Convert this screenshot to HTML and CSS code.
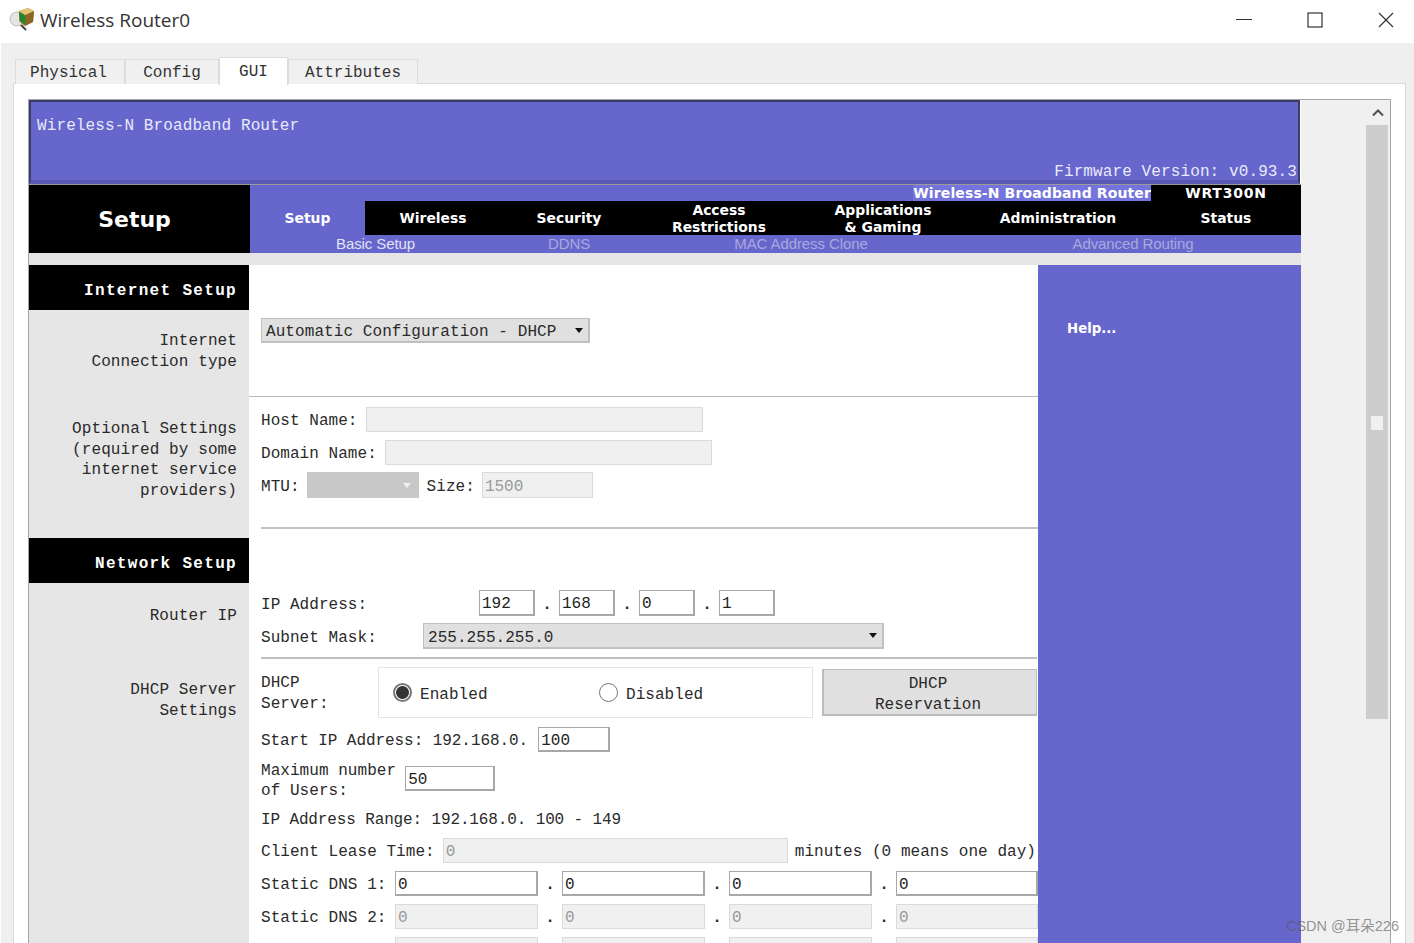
FILE: index.html
```html
<!DOCTYPE html>
<html lang="en">
<head>
<meta charset="utf-8">
<title>Wireless Router0</title>
<link rel="stylesheet" href="styles.css">
</head>
<body>
<div class="window">
  <header class="titlebar">
    <svg class="app-icon" width="26" height="26" viewBox="0 0 26 26">
      <path d="M11 18l6 6" stroke="#444" stroke-width="2" fill="none"/>
      <circle cx="8" cy="13" r="7" fill="#e4e4e4" stroke="#bbb"/>
      <path d="M10 5l9-3 6 3-1 11-9 4-5-5z" fill="#b08a3c"/>
      <path d="M10 6l6 3v10l-5-4z" fill="#1c8a2c"/>
      <path d="M16 9l9-4-1 11-8 4z" fill="#8a6526"/>
      <path d="M10 5l9-3 6 3-9 4z" fill="#e3c476"/>
    </svg>
    <span class="app-title">Wireless Router0</span>
    <div class="controls">
      <svg width="16" height="16" viewBox="0 0 16 16"><path d="M0 7.5h16" stroke="#333" stroke-width="1" fill="none"/></svg>
      <svg width="16" height="16" viewBox="0 0 16 16"><rect x="1" y="1" width="14" height="14" stroke="#333" stroke-width="1.2" fill="none"/></svg>
      <svg width="16" height="16" viewBox="0 0 16 16"><path d="M1 1l14 14M15 1L1 15" stroke="#333" stroke-width="1.2" fill="none"/></svg>
    </div>
  </header>

  <div class="client">
    <nav class="tabs">
      <div class="tab tab-physical">Physical</div>
      <div class="tab tab-config">Config</div>
      <div class="tab tab-gui">GUI</div>
      <div class="tab tab-attr">Attributes</div>
    </nav>
    <div class="panel">
      <div class="frame">
        <div class="page">
          <div class="banner">
            <div>Wireless-N Broadband Router</div>
            <div class="firmware">Firmware Version: v0.93.3</div>
          </div>

          <div class="nav">
            <div class="nav-section">Setup</div>
            <div class="nav-grid">
              <div class="nav-product"><span class="product-name">Wireless-N Broadband Router</span></div>
              <div class="nav-model">WRT300N</div>
              <div class="nav-item nav-active">Setup</div>
              <div class="nav-item">Wireless</div>
              <div class="nav-item">Security</div>
              <div class="nav-item nav-two">Access<br>Restrictions</div>
              <div class="nav-item nav-two">Applications<br>&amp; Gaming</div>
              <div class="nav-item">Administration</div>
              <div class="nav-item">Status</div>
              <div class="sub sub-on span-2">Basic Setup</div>
              <div class="sub">DDNS</div>
              <div class="sub span-2">MAC Address Clone</div>
              <div class="sub span-2">Advanced Routing</div>
            </div>
          </div>
          <div class="stripe"></div>

          <div class="columns">
            <aside class="side">
              <div class="side-head">Internet Setup</div>
              <div class="side-text st-internet">Internet<br>Connection type</div>
              <div class="side-text st-optional">Optional Settings<br>(required by some<br>internet service<br>providers)</div>
              <div class="side-head sh-network">Network Setup</div>
              <div class="side-text st-router">Router IP</div>
              <div class="side-text st-dhcp">DHCP Server<br>Settings</div>
            </aside>

            <main class="form">
              <section class="sec-type">
                <div class="select select-type"><span>Automatic Configuration - DHCP</span><i class="caret"></i></div>
              </section>

              <section class="sec-opt">
                <div class="row"><label>Host Name:</label><input class="in in-off w-host" disabled></div>
                <div class="row"><label>Domain Name:</label><input class="in in-off w-domain" disabled></div>
                <div class="row row-mtu"><label>MTU:</label>
                  <div class="select-off"><i class="caret caret-off"></i></div>
                  <label>Size:</label><input class="in in-off w-size" value="1500" disabled></div>
              </section>
              <div class="rule rule-1"></div>

              <div class="row row-ip"><label class="l-ip">IP Address:</label>
                <input class="in w-oct" value="192"><span class="dot d-ip">.</span>
                <input class="in w-oct" value="168"><span class="dot d-ip">.</span>
                <input class="in w-oct" value="0"><span class="dot d-ip">.</span>
                <input class="in w-oct" value="1"></div>
              <div class="row row-mask"><label class="l-mask">Subnet Mask:</label>
                <div class="select select-mask"><span>255.255.255.0</span><i class="caret"></i></div></div>
              <div class="rule rule-2"></div>

              <div class="row row-dhcp">
                <label class="l-dhcp">DHCP<br>Server:</label>
                <div class="radio-box">
                  <div class="radio-opt"><i class="radio radio-on"></i><span class="radio-text">Enabled</span></div>
                  <div class="radio-opt"><i class="radio"></i><span class="radio-text">Disabled</span></div>
                </div>
                <div class="btn">DHCP<br>Reservation</div>
              </div>

              <div class="row row-start"><label>Start IP Address: 192.168.0.</label><input class="in w-start" value="100"></div>
              <div class="row row-max"><label class="l-max">Maximum number<br>of Users:</label><input class="in w-max" value="50"></div>
              <div class="row row-range"><label>IP Address Range: 192.168.0. 100 - 149</label></div>
              <div class="row row-lease"><label>Client Lease Time:</label><input class="in in-off w-lease" value="0" disabled><label>minutes (0 means one day)</label></div>

              <div class="row row-dns"><label class="l-dns">Static DNS 1:</label>
                <input class="in w-dns" value="0"><span class="dot">.</span>
                <input class="in w-dns" value="0"><span class="dot">.</span>
                <input class="in w-dns" value="0"><span class="dot">.</span>
                <input class="in w-dns-last" value="0"></div>
              <div class="row row-dns"><label class="l-dns">Static DNS 2:</label>
                <input class="in in-off w-dns" value="0" disabled><span class="dot">.</span>
                <input class="in in-off w-dns" value="0" disabled><span class="dot">.</span>
                <input class="in in-off w-dns" value="0" disabled><span class="dot">.</span>
                <input class="in in-off w-dns-last" value="0" disabled></div>
              <div class="row row-dns"><label class="l-dns">Static DNS 3:</label>
                <input class="in in-off w-dns" value="0" disabled><span class="dot">.</span>
                <input class="in in-off w-dns" value="0" disabled><span class="dot">.</span>
                <input class="in in-off w-dns" value="0" disabled><span class="dot">.</span>
                <input class="in in-off w-dns-last" value="0" disabled></div>
            </main>

            <aside class="help">Help...</aside>
          </div>
        </div>

        <div class="gutter"></div>
        <div class="scrollbar">
          <div class="sb-up"><svg width="12" height="8" viewBox="0 0 12 8"><path d="M1 6.5l5-5 5 5" stroke="#505050" stroke-width="2" fill="none"/></svg></div>
          <div class="sb-thumb"><span class="sb-grip"></span></div>
        </div>
      </div>
    </div>
  </div>
</div>
<div class="watermark">CSDN @耳朵226</div>
</body>
</html>
```

FILE: styles.css
```css
* { box-sizing: border-box; }
html, body { margin: 0; padding: 0; height: 943px; overflow: hidden; background: #fff; }
body {
  position: relative;
  font-family: "Liberation Mono", "DejaVu Sans Mono", monospace;
  font-size: 16px;
  color: #2a2a2a;
}
.window { display: flex; flex-direction: column; height: 943px; overflow: hidden; }

/* title bar */
.titlebar { height: 43px; flex: none; display: flex; align-items: center; padding-left: 9px; background: #fff; }
.app-icon { margin-right: 5px; margin-top: -5px; }
.app-title { font-family: "Open Sans", "Noto Sans", sans-serif; font-size: 19px; color: #333; margin-top: -4px; }
.controls { margin-left: auto; display: flex; gap: 55px; padding-right: 20px; margin-top: -4px; }

/* window body */
.client { flex: 1; min-height: 0; margin-left: 1px; background: #efefef; padding: 15px 8px 0 12px; display: flex; flex-direction: column; }
.tabs { display: flex; height: 26px; padding-left: 2px; position: relative; z-index: 1; flex: none; align-items: flex-end; }
.tab { height: 25px; background: #f0f0f0; border: 1px solid #dcdcdc; border-bottom: 0; text-align: center; line-height: 27px; color: #333; }
.tab-physical { width: 110px; padding-right: 3px; }
.tab-config { width: 94px; }
.tab-gui { width: 69px; height: 28px; background: #fff; line-height: 28px; margin-bottom: -1px; }
.tab-attr { width: 130px; }
.panel { flex: 1; min-height: 0; background: #fff; border: 1px solid #d9d9d9; border-bottom: 0; padding: 15px 14px 0 14px; margin-top: -1px; }
.frame { display: flex; height: 100%; border: 1px solid #a2a6aa; border-bottom: 0; width: 1363px; }
.page { width: 1272px; flex: none; display: flex; flex-direction: column; }
.gutter { width: 64px; flex: none; background: #f0f0f0; }
.scrollbar { width: 25px; flex: none; background: #f0f0f0; padding-right: 2px; display: flex; flex-direction: column; }
.sb-up { height: 25px; display: flex; align-items: center; justify-content: center; flex: none; padding-left: 2px; }
.sb-thumb { height: 594px; flex: none; margin-left: 1px; background: #cdcdcd; display: flex; align-items: center; justify-content: center; padding-bottom: 1px; }
.sb-grip { width: 12px; height: 14px; background: #f0f0f0; margin-top: 3px; }

/* banner */
.banner {
  height: 84px; flex: none; background: #6666cc;
  border: 2px solid #3c3c66; border-bottom: 3px solid #5a5ab4; border-left-width: 2px;
  box-shadow: inset 0 -1px 0 #5a5ab4;
  display: flex; flex-direction: column; justify-content: space-between;
  padding: 14px 0 0 6px; color: #eaeafa; line-height: 20px; margin-right: 1px; letter-spacing: .11px;
}
.firmware { text-align: right; padding-right: 1px; margin-bottom: -1px; }

/* nav */
.nav { display: flex; height: 69px; flex: none; border-top: 1px solid #9a9a9a; }
.nav-section { width: 221px; flex: none; background: #000; color: #fff; font: bold 22px/70px "DejaVu Sans", sans-serif; text-align: center; padding-right: 10px; }
.nav-grid { flex: 1; display: grid; grid-template-columns: 115px 136px 136px 164px 164px 186px 150px; grid-template-rows: 16px 34px 18px; font-family: "DejaVu Sans", sans-serif; color: #fff; }
.nav-product { grid-column: 1 / 7; background: #6666cc; text-align: right; font-weight: bold; font-size: 14px; line-height: 16px; }
.product-name { background: #7474dc; display: inline-block; letter-spacing: .12px; }
.nav-model { background: #000; text-align: center; font-weight: bold; font-size: 14px; line-height: 16px; letter-spacing: .8px; }
.nav-item { background: #000; font-weight: bold; font-size: 13.9px; display: flex; align-items: center; justify-content: center; text-align: center; line-height: 17px; padding-top: 1px; }
.nav-active { background: #6666cc; }
.sub { background: #6666cc; color: #a9a9dd; font: 15px/18px "Liberation Sans", sans-serif; text-align: center; letter-spacing: -.1px; }
.sub-on { color: #e2e2f4; }
.span-2 { grid-column: span 2; }
.stripe { height: 12px; flex: none; background: #e6e6e6; }

/* columns */
.columns { flex: 1; min-height: 0; display: flex; }
.side { width: 220px; flex: none; background: #e6e6e6; text-align: right; }
.side-head { height: 45px; background: #000; color: #fff; font-weight: bold; letter-spacing: 1.32px; line-height: 52px; padding-right: 12px; }
.sh-network { margin-top: 36px; }
.side-text { line-height: 20.6px; padding-right: 12px; letter-spacing: .1px; }
.st-internet { margin-top: 21px; }
.st-optional { margin-top: 47px; }
.st-router { margin-top: 23px; }
.st-dhcp { margin-top: 54px; }
.form { width: 789px; flex: none; background: #fff; display: flex; flex-direction: column; overflow: hidden; }
.help { flex: 1; background: #6666cc; color: #fff; font: bold 13.3px/18px "DejaVu Sans", sans-serif; padding: 55px 0 0 29px; }

/* form */
.row { display: flex; align-items: center; flex: none; padding-left: 12px; white-space: nowrap; letter-spacing: .05px; }
.row label { display: block; padding-top: 3px; }
.in { height: 25px; border: 1px solid #b4b4b4; background: #fff; font: 16px "Liberation Mono", monospace; color: #222; padding: 3px 2px 0; margin: 0; outline: 0; flex: none; }
.in:not(.in-off) { border: 2px solid #a8a8a8; border-top-width: 1px; border-left-width: 1px; }
.in-off { background: #f0f0f0; border-color: #dadada; color: #999; }
.sec-type { height: 132px; flex: none; padding: 53px 0 0 12px; border-bottom: 1px solid #b8b8b8; }
.select { height: 25px; background: #e0e0e0; border: 2px solid #c0c0c0; border-width: 1px 2px 2px 1px; display: flex; align-items: center; padding-left: 4px; position: relative; }
.select span { padding-top: 4px; }
.select-type { width: 329px; }
.select-type span { letter-spacing: .08px; }
.caret { width: 0; height: 0; border: 4.5px solid transparent; border-top: 5px solid #111; border-bottom: 0; margin-left: auto; margin-right: 5px; }
.caret-off { border-top-color: #f0f0f0; margin-right: 8px; }
.select-off { width: 112px; height: 26px; background: #c8c8c8; display: flex; align-items: center; flex: none; margin: 0 8px 0 7px; }
.sec-opt { padding-top: 10px; display: flex; flex-direction: column; gap: 8px; flex: none; }
.w-host { width: 337px; margin-left: 8px; }
.w-domain { width: 327px; margin-left: 8px; }
.w-size { width: 111px; margin-left: 7px; height: 26px; }
.row-mtu { margin-top: -1px; height: 26px; }
.rule { height: 1px; background: #a8a8a8; margin-left: 12px; flex: none; }
.rule-1 { margin-top: 29px; height: 2px; background: #c2c2c2; }
.row-ip { margin-top: 61px; height: 26px; }
.l-ip { width: 218px; }
.w-oct { width: 56px; height: 26px; }
.dot { width: 24px; text-align: center; font-weight: bold; padding-top: 3px; flex: none; }
.row-mask { margin-top: 7px; height: 26px; }
.l-mask { width: 162px; }
.select-mask { width: 461px; height: 26px; padding-left: 4px; }
.rule-2 { margin-top: 8px; margin-right: 1px; height: 2px; background: #c0c0c0; }
.row-dhcp { margin-top: 8px; height: 51px; }
.l-dhcp { width: 117px; line-height: 21px; }
.radio-box { width: 435px; height: 51px; border: 1px solid #e4e4e4; display: flex; align-items: center; padding-left: 14px; flex: none; }
.radio-opt { display: flex; align-items: center; width: 206px; }
.radio-text { padding-top: 4px; }
.radio { width: 19px; height: 19px; border-radius: 50%; border: 1px solid #777; background: #fff; margin-right: 8px; flex: none; display: block; }
.radio-on { background: radial-gradient(circle, #333 0 6px, #fff 6.8px); border-width: 2px; }
.btn { width: 215px; height: 47px; margin-left: 9px; padding: 4px 4px 0 0; background: #e0e0e0; border: 2px solid #bcbcbc; border-width: 1px 1px 2px 2px; text-align: center; line-height: 21px; flex: none; }
.row-start { margin-top: 9px; height: 25px; letter-spacing: -.06px; }
.w-start { width: 72px; margin-left: 10px; }
.row-max { margin-top: 7px; height: 41px; }
.l-max { line-height: 20.5px; }
.w-max { width: 90px; margin-left: 9px; margin-top: -2px; }
.row-range { margin-top: 8px; height: 20px; letter-spacing: -.13px; }
.row-lease { margin-top: 10px; height: 25px; }
.w-lease { width: 345px; margin: 0 7px 0 8px; }
.row-dns { margin-top: 8px; height: 25px; }
.l-dns { width: 134px; }
.w-dns { width: 143px; }
.w-dns-last { width: 142px; }

/* overlay */
.watermark {
  position: absolute; right: 15px; bottom: 8px;
  font: 14.5px/18px "Liberation Sans", "Noto Sans CJK SC", sans-serif;
  color: rgba(90, 90, 90, .65);
}
```
